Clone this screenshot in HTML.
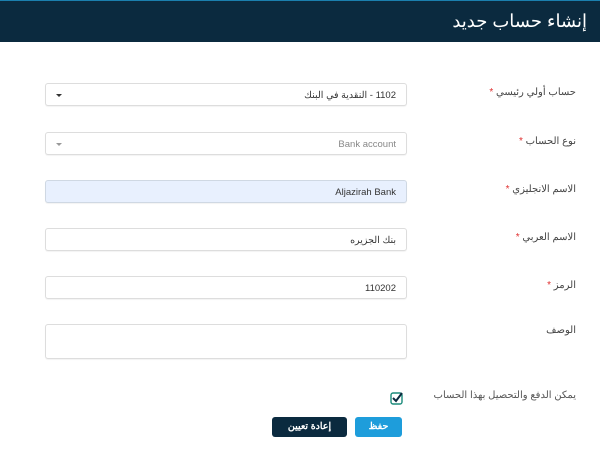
<!DOCTYPE html>
<html><head><meta charset="utf-8"><style>
*{margin:0;padding:0;box-sizing:border-box}
body{width:600px;height:455px;background:#fff;position:relative;overflow:hidden;font-family:"Liberation Sans","Noto Sans CJK SC",sans-serif;color:#333}
.hd{position:absolute;left:0;top:0;width:600px;height:42px;background:#0b2a3f;border-top:1px solid #1b7fae}
.hd span{position:absolute;right:13px;top:10px;color:#fff;font-size:18px;direction:rtl}
.lb{position:absolute;right:24px;font-size:10px;color:#444;direction:rtl}
.lb b{color:#e03030;font-weight:normal}
.in{position:absolute;left:45px;width:362px;height:23px;border:1px solid #ddd;border-radius:3px;background:#fff;font-size:9.5px;color:#333;direction:rtl;padding:6px 10px 0 10px;box-shadow:0 1px 1px rgba(0,0,0,.05)}
.car{position:absolute;left:10px;top:10px;width:0;height:0;border-left:3px solid transparent;border-right:3px solid transparent;border-top:3px solid #333}
.btn{position:absolute;top:417px;height:20px;border-radius:3px;color:#fff;font-size:9.5px;text-align:center;line-height:20px;font-weight:bold}
</style></head><body>
<div class="hd"><span>إنشاء حساب جديد</span></div>
<div class="lb" style="top:87px">حساب أولي رئيسي <b>*</b></div>
<div class="in" style="top:83px">1102 - النقدية في البنك<div class="car"></div></div>
<div class="lb" style="top:136px">نوع الحساب <b>*</b></div>
<div class="in" style="top:132px;color:#888">Bank account<div class="car" style="border-top-color:#999"></div></div>
<div class="lb" style="top:184px">الاسم الانجليزي <b>*</b></div>
<div class="in" style="top:180px;background:#e8f0fe;border-color:#cfd8e3">Aljazirah Bank</div>
<div class="lb" style="top:232px">الاسم العربي <b>*</b></div>
<div class="in" style="top:228px">بنك الجزيره</div>
<div class="lb" style="top:280px">الرمز <b>*</b></div>
<div class="in" style="top:276px">110202</div>
<div class="lb" style="top:325px">الوصف</div>
<div class="in" style="top:324px;height:35px"></div>
<div class="lb" style="top:390px;color:#555">يمكن الدفع والتحصيل بهذا الحساب</div>
<svg style="position:absolute;left:390px;top:391px" width="14" height="14" viewBox="0 0 14 14"><rect x="1" y="2" width="11" height="11" rx="2" fill="none" stroke="#1a8a7a" stroke-width="1.4"/><path d="M3 7l3 3 6-8" fill="none" stroke="#0b2a3f" stroke-width="2"/></svg>
<div class="btn" style="left:355px;width:47px;background:#1e9ddb">حفظ</div>
<div class="btn" style="left:272px;width:75px;background:#0b2a3f">إعادة تعيين</div>
</body></html>
